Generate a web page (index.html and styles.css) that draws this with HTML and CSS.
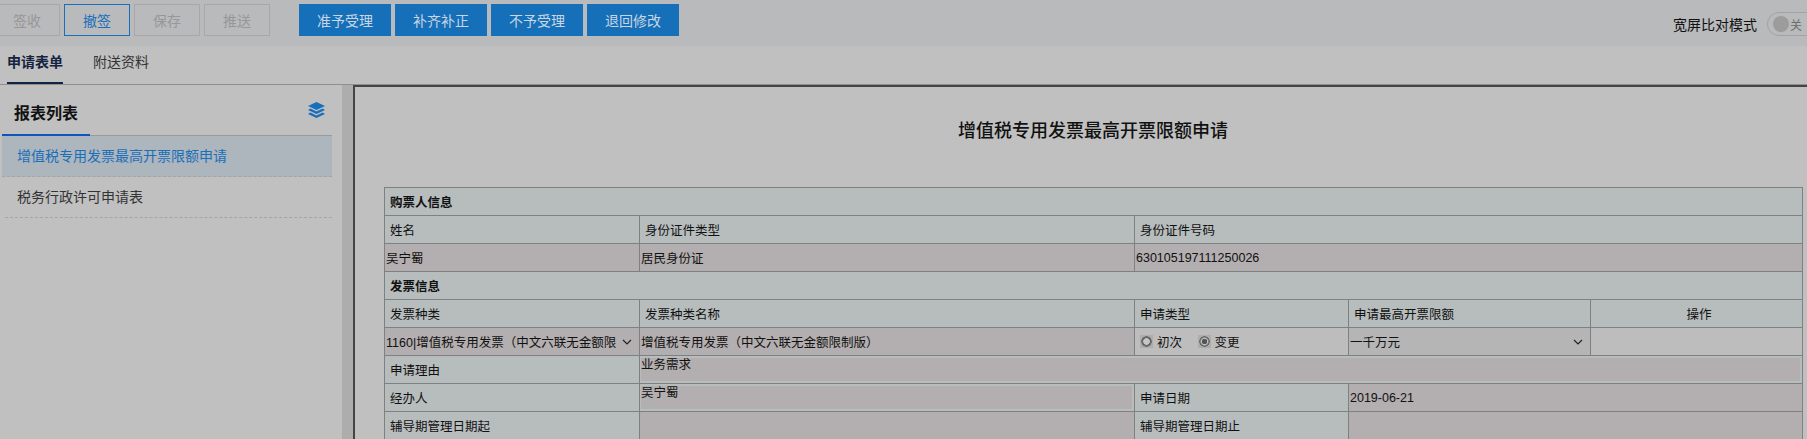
FILE: index.html
```html
<!DOCTYPE html>
<html lang="zh-CN">
<head>
    <meta charset="UTF-8">
    <meta name="viewport" content="width=device-width, initial-scale=1.0">
    <title>增值税专用发票最高开票限额申请</title>
    <link rel="stylesheet" href="styles.css">
</head>
<body>
    <div class="toolbar">
        <div class="btn-group">
            <button class="btn btn-disabled">签收</button>
            <button class="btn btn-outline">撤签</button>
            <button class="btn btn-disabled">保存</button>
            <button class="btn btn-disabled">推送</button>
        </div>
        <div class="btn-group btn-group-primary">
            <button class="btn btn-primary">准予受理</button>
            <button class="btn btn-primary">补齐补正</button>
            <button class="btn btn-primary">不予受理</button>
            <button class="btn btn-primary">退回修改</button>
        </div>
        <div class="compare">
            <span class="compare-label">宽屏比对模式</span>
            <div class="switch"><span class="switch-knob"></span><span class="switch-text">关</span></div>
        </div>
    </div>

    <div class="tabs">
        <a class="tab tab-active">申请表单</a>
        <a class="tab">附送资料</a>
    </div>

    <div class="main">
        <div class="sidebar">
            <div class="sidebar-head">
                <h2 class="sidebar-title">报表列表</h2>
                <svg class="layers-icon" viewBox="0 0 17 16" width="17" height="16">
                    <path d="M8.5 0 17 4 8.5 8 0 4z" fill="#1a6fba"/>
                    <path d="M2.4 6.6 0 7.9 8.5 12 17 7.9 14.6 6.6 8.5 9.5z" fill="#1a6fba"/>
                    <path d="M2.4 10.6 0 11.9 8.5 16 17 11.9 14.6 10.6 8.5 13.5z" fill="#1a6fba"/>
                </svg>
            </div>
            <div class="report-item report-item-active">增值税专用发票最高开票限额申请</div>
            <div class="report-item">税务行政许可申请表</div>
        </div>
        <div class="gutter"></div>
        <div class="content">
            <h1 class="form-title">增值税专用发票最高开票限额申请</h1>
            <table class="form-table">
                <colgroup>
                    <col class="col-a">
                    <col class="col-b">
                    <col class="col-c">
                    <col class="col-d">
                    <col class="col-e">
                </colgroup>
                <tr>
                    <th colspan="5">购票人信息</th>
                </tr>
                <tr>
                    <td>姓名</td>
                    <td>身份证件类型</td>
                    <td colspan="3">身份证件号码</td>
                </tr>
                <tr>
                    <td class="value">吴宁蜀</td>
                    <td class="value">居民身份证</td>
                    <td class="value" colspan="3">630105197111250026</td>
                </tr>
                <tr>
                    <th colspan="5">发票信息</th>
                </tr>
                <tr>
                    <td>发票种类</td>
                    <td>发票种类名称</td>
                    <td>申请类型</td>
                    <td>申请最高开票限额</td>
                    <td class="center">操作</td>
                </tr>
                <tr>
                    <td class="value">
                        <div class="fake-select">
                            <span class="fake-select-text">1160|增值税专用发票（中文六联无金额限</span>
                            <svg class="chevron" viewBox="0 0 10 6" width="10" height="6"><path d="M1 1l4 4 4-4" fill="none" stroke="#222" stroke-width="1.2"/></svg>
                        </div>
                    </td>
                    <td class="value">增值税专用发票（中文六联无金额限制版）</td>
                    <td class="radio-cell">
                        <label class="radio-label"><input type="radio" name="apply-type">初次</label>
                        <label class="radio-label"><input type="radio" name="apply-type" checked>变更</label>
                    </td>
                    <td class="select-cell">
                        <div class="fake-select">
                            <span class="fake-select-text">一千万元</span>
                            <svg class="chevron" viewBox="0 0 10 6" width="10" height="6"><path d="M1 1l4 4 4-4" fill="none" stroke="#222" stroke-width="1.2"/></svg>
                        </div>
                    </td>
                    <td class="empty-cell"></td>
                </tr>
                <tr>
                    <td>申请理由</td>
                    <td class="box-cell" colspan="4"><div class="input-box">业务需求</div></td>
                </tr>
                <tr>
                    <td>经办人</td>
                    <td class="box-cell"><div class="input-box">吴宁蜀</div></td>
                    <td>申请日期</td>
                    <td class="value" colspan="2">2019-06-21</td>
                </tr>
                <tr>
                    <td>辅导期管理日期起</td>
                    <td class="value"></td>
                    <td>辅导期管理日期止</td>
                    <td class="value" colspan="2"></td>
                </tr>
            </table>
        </div>
    </div>
</body>
</html>
```

FILE: styles.css
```css
* {
    box-sizing: border-box;
}
html, body {
    height: 100%;
}
body {
    margin: 0;
    overflow: hidden;
    background-color: #c0c0c0;
    color: #1c1c1c;
    font-family: "Liberation Sans", "Noto Sans CJK SC", sans-serif;
    font-size: 14px;
}
.toolbar {
    display: flex;
    align-items: flex-start;
    height: 46px;
    padding-top: 4px;
    background-color: #b9babc;
}
.btn-group {
    display: flex;
    gap: 4px;
    margin-left: -6px;
}
.btn-group-primary {
    margin-left: 29px;
}
.btn {
    width: 66px;
    height: 32px;
    padding: 0;
    background: transparent;
    border: 1px solid #a8a8a8;
    border-radius: 0;
    font-family: inherit;
    font-size: 14px;
}
.btn-disabled {
    color: #979797;
}
.btn-outline {
    color: #1a6fba;
    border-color: #1a6fba;
}
.btn-primary {
    width: 92px;
    background-color: #166fb9;
    border-color: #166fb9;
    color: #c9d6e2;
}
.compare {
    display: flex;
    align-items: center;
    margin-left: auto;
    margin-right: -12px;
    margin-top: 8px;
    gap: 10px;
}
.compare-label {
    color: #111;
}
.switch {
    display: flex;
    align-items: center;
    gap: 1px;
    width: 52px;
    height: 24px;
    padding-left: 5px;
    border: 1px solid #a3a3a3;
    border-radius: 12px;
}
.switch-knob {
    width: 16px;
    height: 16px;
    border-radius: 50%;
    background-color: #9c9c9c;
}
.switch-text {
    font-size: 12px;
    color: #6d6d6d;
}
.tabs {
    display: flex;
    gap: 30px;
    height: 39px;
    padding-left: 7px;
    border-bottom: 1px solid #8f8f8f;
}
.tab {
    height: 38px;
    line-height: 32px;
    color: #333;
}
.tab-active {
    font-weight: bold;
    color: #14233f;
    border-bottom: 2px solid #0d2444;
}
.main {
    display: flex;
    height: 354px;
}
.sidebar {
    width: 342px;
    padding: 0 10px 0 2px;
}
.sidebar-head {
    display: flex;
    align-items: center;
    justify-content: space-between;
    height: 51px;
    padding-right: 7px;
    border-bottom: 1px solid #9a9a9a;
    position: relative;
}
.sidebar-head::after {
    content: "";
    position: absolute;
    left: 0;
    bottom: -1px;
    width: 88px;
    height: 2px;
    background-color: #0f55c0;
}
.sidebar-title {
    margin: 3px 0 0 12px;
    font-size: 16px;
    font-weight: bold;
    color: #111;
}
.report-item {
    height: 41px;
    line-height: 41px;
    padding-left: 12px;
    margin-left: 3px;
    border-bottom: 1px dashed #a5a5a5;
    color: #333;
}
.report-item-active {
    line-height: 40px;
    padding-left: 15px;
    margin-left: 0;
    background-color: #adb5bd;
    color: #1a6fba;
}
.gutter {
    width: 11px;
    background-color: #adadad;
}
.content {
    flex: 1;
    padding-left: 29px;
    border-left: 2px solid #444;
    border-top: 2px solid #444;
}
.form-title {
    margin: 32px 0 44px;
    width: 1418px;
    line-height: 24px;
    font-size: 18px;
    font-weight: 500;
    text-align: center;
    color: #111;
}
.form-table {
    width: 1418px;
    table-layout: fixed;
    border-collapse: collapse;
    background-color: #b7bcbd;
    font-size: 12.5px;
    color: #111;
}
.col-a { width: 255px; }
.col-b { width: 495px; }
.col-c { width: 214px; }
.col-d { width: 242px; }
.col-e { width: 212px; }
.form-table tr {
    height: 28px;
}
.form-table th,
.form-table td {
    padding: 0 0 0 5px;
    border: 1px solid #7d8182;
    text-align: left;
    white-space: nowrap;
    overflow: hidden;
}
.form-table th {
    font-weight: bold;
}
.form-table td.value {
    padding-left: 1px;
    background-color: #b3aeaf;
}
.form-table td.center {
    text-align: center;
}
.form-table td.radio-cell {
    background-color: #bdbdbd;
}
.form-table td.select-cell {
    padding-left: 1px;
    background-color: #b5b5b5;
}
.form-table td.empty-cell {
    background-color: #bdbdbd;
}
.form-table td.box-cell {
    padding: 2px 2px 2px 1px;
}
.input-box {
    height: 23px;
    line-height: 15px;
    background-color: #b3aeaf;
}
.fake-select {
    display: flex;
    align-items: center;
    justify-content: space-between;
    padding-right: 7px;
}
.fake-select-text {
    flex: 1;
    margin-right: 2px;
}
.radio-label {
    display: inline-flex;
    align-items: center;
    margin-right: 12px;
}
.radio-label input {
    appearance: none;
    width: 13px;
    height: 13px;
    margin: 0 4px 0 0;
    background: radial-gradient(circle, #c6c6c6 0 3px, #6a6a6a 3.5px 5px, #adadad 5.5px);
}
.radio-label input:checked {
    background: radial-gradient(circle, #555 0 2.5px, #c6c6c6 3px, #6a6a6a 4.5px 5px, #adadad 5.5px);
}
```
